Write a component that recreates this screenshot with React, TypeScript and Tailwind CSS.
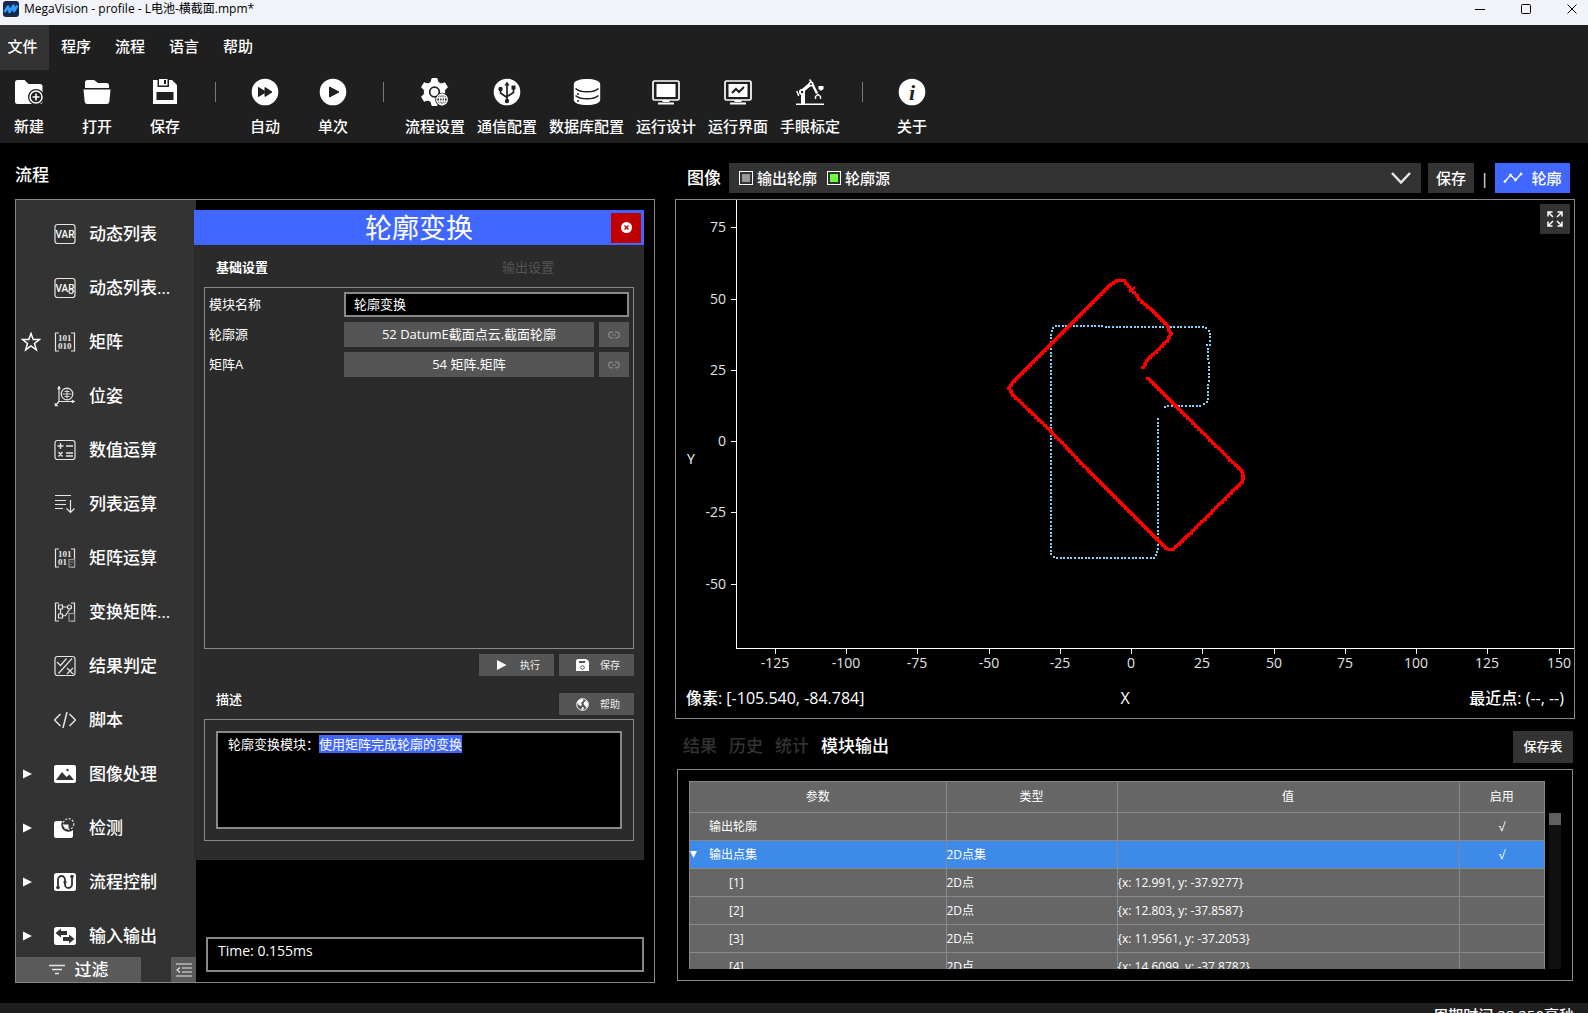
import { useEffect, useRef, useState } from 'react'
import type { ReactNode } from 'react'

type Point = [number, number]

interface ToolItem {
  label: string
  icon: ReactNode
  width: string
}

interface ModuleItem {
  label: string
  icon: ReactNode
  starred?: boolean
  expandable?: boolean
}

const MENUS = ['文件', '程序', '流程', '语言', '帮助']

const SMALL = 'w-[58px]'
const MEDIUM = 'w-[62px]'
const LARGE = 'w-[77px]'

function ToolIcon({ children }: { children: ReactNode }) {
  return (
    <svg width="28" height="28" viewBox="0 0 28 28" fill="#fff" aria-hidden="true">
      {children}
    </svg>
  )
}

function ModuleIcon({ children }: { children: ReactNode }) {
  return (
    <svg
      width="22"
      height="22"
      viewBox="0 0 22 22"
      fill="none"
      stroke="#e6e6e6"
      strokeWidth="1.2"
      className="shrink-0"
      aria-hidden="true"
    >
      {children}
    </svg>
  )
}

const TOOL_GROUPS: ToolItem[][] = [
  [
    {
      label: '新建',
      width: SMALL,
      icon: (
        <ToolIcon>
          <path d="M0 4.500a2.500 2.500 0 0 1 2.500-2.500h7l4 4h11.500a2.500 2.500 0 0 1 2.500 2.500v15a2.500 2.500 0 0 1-2.500 2.500h-22.500a2.500 2.500 0 0 1-2.500-2.500z" />
          <circle cx="21" cy="19" r="8" fill="#1f1f1f" />
          <circle cx="21" cy="19" r="6" fill="none" stroke="#fff" strokeWidth="1.500" />
          <path d="M21 15.500v7M17.500 19h7" stroke="#fff" strokeWidth="1.600" />
        </ToolIcon>
      ),
    },
    {
      label: '打开',
      width: SMALL,
      icon: (
        <ToolIcon>
          <path d="M2 10V4.500a2.500 2.500 0 0 1 2.500-2.500h6.500l4 3h8.500a2.500 2.500 0 0 1 2.500 2.500V10z" />
          <path d="M.5 11.500h27l-1.200 12.500a2.500 2.500 0 0 1-2.500 2h-19.600a2.500 2.500 0 0 1-2.500-2z" />
        </ToolIcon>
      ),
    },
    {
      label: '保存',
      width: SMALL,
      icon: (
        <ToolIcon>
          <path d="M2 2h19l5 5v19h-24z" />
          <path d="M6.500 1h11.500v8h-11.500z" fill="#1f1f1f" />
          <path d="M8 1h8.500v6.500h-8.500z" />
          <path d="M5.500 14h17v8h-17z" fill="#1f1f1f" />
          <path d="M13 2h2v4h-2z" fill="#1f1f1f" />
        </ToolIcon>
      ),
    },
  ],
  [
    {
      label: '自动',
      width: SMALL,
      icon: (
        <ToolIcon>
          <circle cx="14" cy="14" r="13.300" />
          <path d="M7.500 9.500l6.500 4V9.500l7 4.500-7 4.500v-4l-6.500 4z" fill="#1f1f1f" strokeLinejoin="round" stroke="#1f1f1f" />
        </ToolIcon>
      ),
    },
    {
      label: '单次',
      width: SMALL,
      icon: (
        <ToolIcon>
          <circle cx="14" cy="14" r="13.300" />
          <path d="M10.500 9l9.500 5-9.500 5z" fill="#1f1f1f" stroke="#1f1f1f" strokeLinejoin="round" />
        </ToolIcon>
      ),
    },
  ],
  [
    {
      label: '流程设置',
      width: MEDIUM,
      icon: (
        <ToolIcon>
          <path
            d="M11 .5h5l1 3.800 3 1.700 3.800-1.200 2.600 4.400-2.800 2.800v4l2.800 2.800-2.600 4.400-3.800-1.200-3 1.700-1 3.800h-5l-1-3.800-3-1.700-3.800 1.200-2.600-4.400 2.800-2.800v-4l-2.800-2.800 2.600-4.400 3.800 1.200 3-1.700z"
            stroke="#fff"
            strokeLinejoin="round"
          />
          <circle cx="13.500" cy="14" r="4.800" fill="#fff" stroke="#1f1f1f" strokeWidth="1.700" />
          <circle cx="21" cy="21.500" r="6.800" fill="#1f1f1f" />
          <g fill="none" stroke="#fff" strokeWidth="1.200">
            <circle cx="21" cy="21.500" r="5.300" />
            <ellipse cx="21" cy="21.500" rx="2.400" ry="5.300" />
            <path d="M15.800 19.800h10.400M15.800 23.200h10.400M21 16v11" />
          </g>
        </ToolIcon>
      ),
    },
    {
      label: '通信配置',
      width: MEDIUM,
      icon: (
        <ToolIcon>
          <circle cx="14" cy="14" r="13.300" />
          <g fill="none" stroke="#1f1f1f" strokeWidth="1.700">
            <path d="M14 6v16M7.500 11v4l6.500 4.500M20.500 10v4.500l-6.500 4" />
          </g>
          <path d="M14 3.500l2.600 4h-5.200zM18.500 7.500h4v4h-4z" fill="#1f1f1f" />
          <circle cx="7.500" cy="11" r="2.200" fill="#1f1f1f" />
          <circle cx="14" cy="23" r="2.200" fill="#1f1f1f" />
        </ToolIcon>
      ),
    },
    {
      label: '数据库配置',
      width: LARGE,
      icon: (
        <ToolIcon>
          <path d="M.8 6c0-3 6-5 13.200-5s13.200 2 13.200 5v16c0 3-6 5-13.200 5s-13.200-2-13.200-5z" />
          <path
            d="M2.500 10.500c2.500 2.500 7 3.300 11.500 3.300s9-.8 11.500-3.300M2.500 17.500c2.500 2.500 7 3.300 11.500 3.300s9-.8 11.500-3.300"
            fill="none"
            stroke="#1f1f1f"
            strokeWidth="1.400"
          />
          <circle cx="5" cy="16" r="1" fill="#1f1f1f" />
          <circle cx="5" cy="23" r="1" fill="#1f1f1f" />
        </ToolIcon>
      ),
    },
    {
      label: '运行设计',
      width: MEDIUM,
      icon: (
        <ToolIcon>
          <rect x="1" y="3" width="26" height="19" rx="1.500" fill="none" stroke="#fff" strokeWidth="1.700" />
          <path d="M4.500 6h19v13h-19zM10.500 22h7v2h-7zM6 24.500h16v2h-16z" />
        </ToolIcon>
      ),
    },
    {
      label: '运行界面',
      width: MEDIUM,
      icon: (
        <ToolIcon>
          <rect x="1" y="3" width="26" height="19" rx="1.500" fill="none" stroke="#fff" strokeWidth="1.700" />
          <path d="M4.500 6h19v13h-19zM10.500 22h7v2h-7zM6 24.500h16v2h-16z" />
          <path d="M8 15l4-4 3 3 5-5" fill="none" stroke="#1f1f1f" strokeWidth="2" />
        </ToolIcon>
      ),
    },
    {
      label: '手眼标定',
      width: MEDIUM,
      icon: (
        <ToolIcon>
          <path d="M0 25.500h28v1.500h-28zM5 15h4v11h-4z" />
          <path d="M5 14l9.500-8" stroke="#fff" strokeWidth="3.500" />
          <path d="M15.500 4.500l5.500 11" stroke="#fff" strokeWidth="2.400" />
          <circle cx="15" cy="6" r="2.500" />
          <circle cx="15" cy="6" r="1" fill="#1f1f1f" />
          <circle cx="6" cy="14" r="3" />
          <circle cx="6" cy="14" r="1.200" fill="#1f1f1f" />
          <path d="M13.500 1.500l2 2.500M.8 13l2 5" stroke="#fff" strokeWidth="1.500" />
          <path d="M19.500 21v-2.500l2.500-2 2.500 2v2.500" fill="none" stroke="#fff" strokeWidth="1.400" />
          <path d="M22.500 8h5v3l-2 1.500h-1l-2-1.500z" />
        </ToolIcon>
      ),
    },
  ],
  [
    {
      label: '关于',
      width: SMALL,
      icon: (
        <ToolIcon>
          <circle cx="14" cy="14" r="13.300" />
          <text
            x="14"
            y="21.500"
            fill="#1f1f1f"
            textAnchor="middle"
            fontFamily="Liberation Serif, serif"
            fontSize="22"
            fontStyle="italic"
            fontWeight="700"
          >
            i
          </text>
        </ToolIcon>
      ),
    },
  ],
]

const frame = <rect x="1" y="1.500" width="20" height="19" rx="2.500" />
const brackets = <path d="M5 2h-3.500v18h3.500M17 2h3.500v18h-3.500" />

function Bits({ x, y, children }: { x: number; y: number; children: string }) {
  return (
    <text
      x={x}
      y={y}
      fill="#e6e6e6"
      stroke="none"
      fontFamily="Liberation Serif, serif"
      fontSize="9"
      fontWeight="700"
    >
      {children}
    </text>
  )
}

function VarText() {
  return (
    <text
      x="11"
      y="15"
      fill="#fff"
      stroke="none"
      textAnchor="middle"
      fontFamily="Liberation Sans Narrow, Roboto, sans-serif"
      fontSize="10"
    >
      VAR
    </text>
  )
}

const MODULES: ModuleItem[] = [
  {
    label: '动态列表',
    icon: (
      <ModuleIcon>
        {frame}
        <VarText />
      </ModuleIcon>
    ),
  },
  {
    label: '动态列表…',
    icon: (
      <ModuleIcon>
        {frame}
        <VarText />
        <circle cx="17" cy="14.500" r="2" fill="#333" />
      </ModuleIcon>
    ),
  },
  {
    label: '矩阵',
    starred: true,
    icon: (
      <ModuleIcon>
        {brackets}
        <Bits x={4} y={10}>101</Bits>
        <Bits x={4} y={18}>010</Bits>
      </ModuleIcon>
    ),
  },
  {
    label: '位姿',
    icon: (
      <ModuleIcon>
        <path d="M5 1.500v15h15.500M5 16.500l-3.500 4" />
        <path d="M3.500 4l1.500-3 1.500 3zM18 15l3 1.500-3 1.500zM1 18v3h3z" fill="#e6e6e6" strokeWidth=".5" />
        <circle cx="13" cy="9" r="5.800" />
        <path d="M13 4.500v9M8.500 9h9M10.500 6.500h5M10.500 11.500h5" strokeWidth=".9" />
      </ModuleIcon>
    ),
  },
  {
    label: '数值运算',
    icon: (
      <ModuleIcon>
        {frame}
        <path d="M3.500 7h6M6.500 4v6M12 7h7M12 14h7M12 17h7M4.500 13l4 4.500M8.500 13l-4 4.500" strokeWidth="1.400" />
      </ModuleIcon>
    ),
  },
  {
    label: '列表运算',
    icon: (
      <ModuleIcon>
        <path d="M1 2.500h16M1 7.500h11M1 11.500h11M1 15.500h8M16.500 7v12M12.500 15.500l4 4 4-4" />
      </ModuleIcon>
    ),
  },
  {
    label: '矩阵运算',
    icon: (
      <ModuleIcon>
        {brackets}
        <Bits x={4} y={10}>101</Bits>
        <Bits x={4} y={18}>01</Bits>
        <rect x="15" y="12.500" width="5.500" height="7.500" fill="#333" stroke="#999" />
        <path d="M16.500 15h2.500M16.500 17.500h1" stroke="#999" />
      </ModuleIcon>
    ),
  },
  {
    label: '变换矩阵…',
    icon: (
      <ModuleIcon>
        {brackets}
        <path d="M4.500 4h4v4h-4zM4.500 13h4v4h-4zM6.500 8v5M8.500 6h5M8.500 15l3-.5 4-6" />
        <circle cx="15.500" cy="6" r="2" />
        <rect x="15" y="12.500" width="5.500" height="7.500" fill="#333" stroke="#999" />
      </ModuleIcon>
    ),
  },
  {
    label: '结果判定',
    icon: (
      <ModuleIcon>
        {frame}
        <path d="M3 7l3.500 3.500 6-7M4.500 18.500l13.500-15M13 13l6 6M19 13l-6 6" />
      </ModuleIcon>
    ),
  },
  {
    label: '脚本',
    icon: (
      <ModuleIcon>
        <path d="M6.500 5l-6 6 6 6M15.500 5l6 6-6 6M13 3l-4 16" strokeWidth="1.500" />
      </ModuleIcon>
    ),
  },
  {
    label: '图像处理',
    expandable: true,
    icon: (
      <ModuleIcon>
        <rect x="0" y="2" width="22" height="18" rx="2" fill="#fff" stroke="none" />
        <path d="M2 17l6-8 4.500 5 3-2.500 4.500 5.500z" fill="#333" stroke="none" />
        <circle cx="13.500" cy="7" r="1.200" fill="#333" stroke="none" />
      </ModuleIcon>
    ),
  },
  {
    label: '检测',
    expandable: true,
    icon: (
      <ModuleIcon>
        <rect x="0" y="4" width="19" height="17" rx="2.500" fill="#fff" stroke="none" />
        <path d="M9 3h10.500v9.500a6 6 0 0 1-10.500-9.500z" fill="#333" stroke="none" />
        <path d="M14.500 7.500v5a5 5 0 0 1-5-5z" fill="#fff" stroke="none" />
        <circle cx="14.500" cy="7" r="5.300" stroke="#ddd" strokeDasharray="2 1.500" />
      </ModuleIcon>
    ),
  },
  {
    label: '流程控制',
    expandable: true,
    icon: (
      <ModuleIcon>
        <rect x="0" y="2" width="22" height="18" rx="2.500" fill="#fff" stroke="none" />
        <path
          d="M4 16.500V8.500a3.500 3.500 0 0 1 7 0V13.500a3.500 3.500 0 0 0 7 0V5.500"
          stroke="#333"
          strokeWidth="1.800"
        />
        <circle cx="4" cy="16.500" r="1.800" fill="#333" stroke="none" />
        <circle cx="18" cy="5.500" r="1.800" fill="#333" stroke="none" />
        <circle cx="11" cy="11" r="1.600" fill="#333" stroke="none" />
      </ModuleIcon>
    ),
  },
  {
    label: '输入输出',
    expandable: true,
    icon: (
      <ModuleIcon>
        <rect x="0" y="2" width="22" height="18" rx="2.500" fill="#fff" stroke="none" />
        <path
          d="M1.500 8l5.500-4.500v2.500h6v4h-6v2.500zM20.500 14l-5.500 4.500v-2.500h-6v-4h6v-2.500z"
          fill="#333"
          stroke="none"
        />
      </ModuleIcon>
    ),
  },
]

const ROWS = [
  { name: '[1]', type: '2D点', value: '{x: 12.991, y: -37.9277}' },
  { name: '[2]', type: '2D点', value: '{x: 12.803, y: -37.8587}' },
  { name: '[3]', type: '2D点', value: '{x: 11.9561, y: -37.2053}' },
  { name: '[4]', type: '2D点', value: '{x: 14.6099, y: -37.8782}' },
]

const SOURCE_CONTOUR: Point[] = [
  [482, 219], [482, 350], [479, 358], [379, 358], [375, 354], [375, 134], [376, 129], [379, 126],
  [427, 126], [430, 127], [529, 127], [534, 132], [534, 145], [531, 145], [532, 148], [533, 172],
  [532, 197], [531, 202], [525, 206], [491, 206], [486, 209],
]

const OUTPUT_CONTOUR: Point[] = [
  [472, 178], [487, 193], [502, 208], [566, 271], [568, 277], [566, 282], [504, 343], [497, 349],
  [491, 349], [484, 342], [414, 272], [374, 230], [337, 195], [333, 188], [336, 183], [434, 85],
  [441, 80], [448, 80], [455, 89], [467, 103], [474, 108], [491, 125], [495, 133], [492, 140],
  [472, 159], [467, 168],
]

// Walk along the outline and return a point every `step` units
function sample(points: Point[], step: number): Point[] {
  const result: Point[] = []
  let carry = 0
  for (let i = 1; i < points.length; i++) {
    const [x0, y0] = points[i - 1]
    const [x1, y1] = points[i]
    const length = Math.hypot(x1 - x0, y1 - y0)
    let at = carry
    while (at < length) {
      result.push([
        Math.round(x0 + ((x1 - x0) * at) / length),
        Math.round(y0 + ((y1 - y0) * at) / length),
      ])
      at += step
    }
    carry = at - length
  }
  return result
}

const toPath = (points: Point[]) => 'M' + points.map((p) => p.join(' ')).join('L')

const X_TICKS = [-125, -100, -75, -50, -25, 0, 25, 50, 75, 100, 125, 150]
const Y_TICKS = [75, 50, 25, 0, -25, -50]
const SCALE = 2.85

function ContourPlot() {
  const source = sample(SOURCE_CONTOUR, 3.6)
  const output = sample(OUTPUT_CONTOUR, 4)

  return (
    <svg viewBox="0 0 898 480" className="min-h-0 w-full flex-1" role="img" aria-label="轮廓">
      <g shapeRendering="crispEdges">
        <path d="M60.500 0V448.500H898" fill="none" stroke="#fff" />
        {X_TICKS.map((v) => {
          const x = Math.round(455 + v * SCALE) + 0.5
          return <path key={v} d={`M${x} 449v5`} stroke="#fff" />
        })}
        {Y_TICKS.map((v) => {
          const y = Math.round(241 - v * SCALE) + 0.5
          return <path key={v} d={`M55 ${y}h5`} stroke="#fff" />
        })}
        {source.map(([x, y], i) => (
          <rect key={i} x={x - 1} y={y - 1} width="2" height="2" fill="#87cefa" />
        ))}
        <path d={toPath(OUTPUT_CONTOUR.slice(0, 9))} fill="none" stroke="#f00" strokeWidth="3" />
        <path d={toPath(OUTPUT_CONTOUR.slice(8))} fill="none" stroke="#f00" strokeWidth="3" />
        {output.map(([x, y], i) => (
          <rect key={i} x={x - 2} y={y - 1} width="4" height="3" fill="#f00" />
        ))}
        <path d="M453 92l6-5M453 87l6 6" stroke="#f00" strokeWidth="2" />
      </g>
      <g fill="#e4e4e4" fontSize="14">
        {X_TICKS.map((v) => (
          <text key={v} x={Math.round(455 + v * SCALE)} y="468" textAnchor="middle">
            {v}
          </text>
        ))}
        {Y_TICKS.map((v) => (
          <text key={v} x="50" y={Math.round(246 - v * SCALE)} textAnchor="end">
            {v}
          </text>
        ))}
        <text x="15" y="264" textAnchor="middle" fill="#fff" fontWeight="500">
          Y
        </text>
      </g>
    </svg>
  )
}

function TitleBar() {
  return (
    <header className="flex h-[25px] shrink-0 items-center bg-[#f1f3f9] pr-4 pb-[7px] pl-[3px] text-xs text-black">
      <svg width="16" height="16" viewBox="0 0 16 16" aria-hidden="true">
        <rect width="16" height="16" rx="3" fill="#14284b" />
        <path
          d="M1.500 11l3.500-5.500 1.500 5.500 4-6.500.5 5.500 3.500-5.500"
          fill="none"
          stroke="#2f9bff"
          strokeWidth="2.600"
          strokeLinejoin="round"
        />
      </svg>
      <h1 className="ml-[5px] flex-1 leading-4">MegaVision - profile - L电池-横截面.mpm*</h1>
      <div className="flex gap-[35px]">
        <button aria-label="最小化">
          <svg width="11" height="11" stroke="#000">
            <path d="M0 5.500h10" />
          </svg>
        </button>
        <button aria-label="最大化">
          <svg width="11" height="11" fill="none" stroke="#000">
            <rect x=".5" y=".5" width="9" height="9" rx="1" />
          </svg>
        </button>
        <button aria-label="关闭" className="-mr-1.5">
          <svg width="11" height="11" stroke="#000">
            <path d="M.5.5l9 9M9.500.5l-9 9" />
          </svg>
        </button>
      </div>
    </header>
  )
}

function ToolBar() {
  return (
    <div className="flex h-[73px] shrink-0 gap-2.5 bg-[#1f1f1f] pt-2 text-[15px] font-medium">
      {TOOL_GROUPS.map((group, i) => (
        <div key={i} className="flex gap-2.5">
          {i > 0 && (
            <div className="flex w-[22px] justify-center pt-1">
              <div className="h-5 w-px bg-[#777]" />
            </div>
          )}
          {group.map((tool) => (
            <button key={tool.label} className={`flex flex-col items-center ${tool.width}`}>
              {tool.icon}
              <span className="mt-2.5 leading-5 whitespace-nowrap">{tool.label}</span>
            </button>
          ))}
        </div>
      ))}
    </div>
  )
}

function ModuleList() {
  return (
    <nav className="flex w-[180px] shrink-0 flex-col bg-[#333] font-medium">
      <ul className="min-h-0 flex-1 overflow-hidden pt-[7px]">
        {MODULES.map((item) => (
          <li key={item.label}>
            <button className="flex h-[54px] w-full items-center text-[17px]">
              <span className="flex w-[38px] shrink-0 pl-[5px]">
                {item.starred && (
                  <svg width="20" height="20" viewBox="0 0 20 20" fill="none" stroke="#fff" strokeWidth="1.500">
                    <path d="M10 1.500l2.200 6h6.300l-5 4 1.800 6.300-5.300-3.800-5.300 3.800 1.800-6.300-5-4h6.300z" />
                  </svg>
                )}
                {item.expandable && (
                  <svg width="14" height="10" viewBox="0 0 14 10" fill="#fff">
                    <path d="M2 .5l9 4.500-9 4.500z" />
                  </svg>
                )}
              </span>
              {item.icon}
              <span className="ml-[13px] whitespace-nowrap">{item.label}</span>
            </button>
          </li>
        ))}
      </ul>
      <div className="flex h-[25px] shrink-0 justify-between">
        <button className="flex w-[125px] items-center justify-center gap-2.5 bg-[#5a5a5a] text-[17px]">
          <svg width="16" height="12" stroke="#e6e6e6" strokeWidth="1.500">
            <path d="M0 1.500h16M3 5.500h10M6 9.500h4" />
          </svg>
          过滤
        </button>
        <button aria-label="收起" className="flex w-[25px] items-center justify-center bg-[#5a5a5a]">
          <svg width="16" height="14" fill="none" stroke="#e6e6e6" strokeWidth="1.200">
            <path d="M0 1h16M6 5h10M6 9h10M0 13h16M4 4.500l-3 2.500 3 2.500" />
          </svg>
        </button>
      </div>
    </nav>
  )
}

function LinkButton({ label }: { label: string }) {
  return (
    <button aria-label={label} className="flex w-[30px] items-center justify-center bg-[#555]">
      <svg width="12" height="8" viewBox="0 0 12 8" fill="none" stroke="#888" strokeWidth="1.200">
        <path d="M5 1.200H3.500a2.800 2.800 0 0 0 0 5.600H5M7 1.200h1.500a2.800 2.800 0 0 1 0 5.600H7M4 4h4" />
      </svg>
    </button>
  )
}

function SmallButton({ icon, children }: { icon: ReactNode; children: string }) {
  return (
    <button className="flex h-[22px] w-[75px] items-center bg-[#555] pl-[17px] text-[10px] text-[#eee]">
      <span className="w-[24px]">{icon}</span>
      {children}
    </button>
  )
}

function ContourDialog() {
  const [name, setName] = useState('轮廓变换')
  const descriptionRef = useRef<HTMLTextAreaElement>(null)

  useEffect(() => {
    // The summary after the colon starts out selected
    const area = descriptionRef.current
    if (!area) return
    area.focus()
    area.setSelectionRange(7, area.value.length)
  }, [])

  return (
    <section className="-ml-0.5 flex h-[650px] flex-col bg-[#2b2b2b] text-[13px]">
      <div className="flex h-[35px] shrink-0 items-center bg-[#4067ff] pr-[3px] pl-[33px]">
        <h2 className="flex-1 text-center text-[27px] leading-[35px]">轮廓变换</h2>
        <button aria-label="关闭" className="flex size-[30px] items-center justify-center bg-[#c00000]">
          <svg width="11" height="11" viewBox="0 0 11 11">
            <circle cx="5.500" cy="5.500" r="5.500" fill="#fff" />
            <path d="M3.500 3.500l4 4M7.500 3.500l-4 4" stroke="#c00000" strokeWidth="1.300" />
          </svg>
        </button>
      </div>
      <div className="mt-3 flex px-[22px]" role="tablist">
        <button role="tab" aria-selected="true" className="flex-1 text-left leading-5 font-bold">
          基础设置
        </button>
        <button role="tab" aria-selected="false" className="w-[120px] text-left leading-5 text-[#555]">
          输出设置
        </button>
      </div>
      <div className="mx-2.5 mt-2.5 flex min-h-0 flex-1 flex-col gap-[5px] border border-[#888] p-1">
        <div className="flex h-[25px] items-center">
          <label htmlFor="module-name" className="w-[135px]">
            模块名称
          </label>
          <input
            id="module-name"
            value={name}
            onChange={(e) => setName(e.target.value)}
            className="h-full min-w-0 flex-1 border-2 border-[#888] bg-black px-2 pb-0.5 outline-none"
          />
        </div>
        <div className="flex h-[25px]">
          <span className="w-[135px] leading-[25px]">轮廓源</span>
          <button className="mr-[5px] flex-1 bg-[#555]">52 DatumE截面点云.截面轮廓</button>
          <LinkButton label="链接轮廓源" />
        </div>
        <div className="flex h-[25px]">
          <span className="w-[135px] leading-[25px]">矩阵A</span>
          <button className="mr-[5px] flex-1 bg-[#555]">54 矩阵.矩阵</button>
          <LinkButton label="链接矩阵A" />
        </div>
      </div>
      <div className="mx-2.5 mt-[5px] flex justify-end gap-[5px]">
        <SmallButton
          icon={
            <svg width="11" height="12" viewBox="0 0 11 12" fill="#fff">
              <path d="M1 1l9.500 5L1 11z" />
            </svg>
          }
        >
          执行
        </SmallButton>
        <SmallButton
          icon={
            <svg width="13" height="12" viewBox="0 0 13 12">
              <path d="M1.500 0h9L13 2.500V12H0V1.500z" fill="#fff" />
              <path d="M3 2h6v2H3z" fill="#555" />
              <circle cx="6.500" cy="8.500" r="1.800" fill="none" stroke="#555" />
            </svg>
          }
        >
          保存
        </SmallButton>
      </div>
      <div className="mx-2.5 mt-[17px] flex items-center justify-between">
        <h3 className="pb-2.5 pl-3 leading-3 font-medium">描述</h3>
        <SmallButton
          icon={
            <svg width="13" height="13" viewBox="0 0 13 13">
              <circle cx="6.500" cy="6.500" r="5.800" fill="none" stroke="#fff" />
              <path
                d="M2 3l4-2.500 1.500 2L5 5l1 2-1.500 1L1.500 6zM8 4l3-1.500 1.500 4-2 3.500-1.500-2-1.500-2zM6 9l2 .5-1 2.500-1.500-.5z"
                fill="#fff"
              />
            </svg>
          }
        >
          帮助
        </SmallButton>
      </div>
      <div className="mx-2.5 mt-1 mb-[19px] flex h-[122px] shrink-0 border border-[#888] p-[11px]">
        <textarea
          ref={descriptionRef}
          readOnly
          aria-label="描述"
          defaultValue="轮廓变换模块：使用矩阵完成轮廓的变换"
          className="w-full resize-none border-2 border-[#888] bg-black px-2.5 py-0.5 leading-[18px] outline-none selection:bg-[#4067ff] selection:text-white"
        />
      </div>
    </section>
  )
}

function Legend({ label, color }: { label: string; color: string }) {
  return (
    <label className="flex items-center gap-1">
      <input
        type="checkbox"
        className={`size-3.5 appearance-none border border-white bg-clip-content p-0.5 ${color}`}
      />
      {label}
    </label>
  )
}

function ImagePanel() {
  return (
    <>
      <div className="flex h-[30px] shrink-0 items-center pr-[5px] pl-3 text-[15px] font-medium">
        <h2 className="w-[42px] text-[17px]">图像</h2>
        <div className="flex h-full flex-1 items-center gap-2.5 bg-[#333] px-2.5">
          <Legend label="输出轮廓" color="bg-[#999]" />
          <Legend label="轮廓源" color="bg-[#6cff3e]" />
          <button aria-label="展开" className="ml-auto">
            <svg width="20" height="12" fill="none" stroke="#e6e6e6" strokeWidth="2.500">
              <path d="M1 1l9 9.500L19 1" />
            </svg>
          </button>
        </div>
        <button className="ml-[7px] h-full w-[46px] bg-[#333]">保存</button>
        <span className="w-[21px] text-center">|</span>
        <button className="flex h-full w-[75px] items-center justify-center gap-2 bg-[#4067ff]">
          <svg width="20" height="12" viewBox="0 0 20 12" fill="#fff" stroke="#fff">
            <path d="M2 9.500l5.500-6.500 5 5L18 2" fill="none" strokeWidth="1.300" />
            <circle cx="2" cy="9.500" r="1" />
            <circle cx="7.500" cy="3" r="1" />
            <circle cx="12.500" cy="8" r="1" />
            <circle cx="18" cy="2" r="1" />
          </svg>
          轮廓
        </button>
      </div>
      <div className="relative mt-1.5 flex min-h-0 flex-1 flex-col border border-[#888]">
        <ContourPlot />
        <button
          aria-label="全屏"
          className="absolute top-1 right-1 flex size-[30px] items-center justify-center bg-[#333]"
        >
          <svg width="16" height="16" fill="none" stroke="#fff" strokeWidth="1.500">
            <path d="M1 5.500V1h4.500M1 1l5 5M10.500 1H15v4.500M15 1l-5 5M1 10.500V15h4.500M1 15l5-5M10.500 15H15v-4.500M15 15l-5-5" />
          </svg>
        </button>
        <div className="flex h-[38px] shrink-0 items-center px-2.5 pb-0.5 text-base font-medium">
          <span className="flex-1">像素: [-105.540, -84.784]</span>
          <span>X</span>
          <span className="flex-1 text-right">最近点: (--, --)</span>
        </div>
      </div>
    </>
  )
}

const CELL = 'border border-[#888] p-0 font-normal'

function OutputTable() {
  return (
    <div className="flex h-[212px] shrink-0 border border-[#888] p-[11px]">
      <div className="min-w-0 flex-1 overflow-hidden">
        <table className="w-full table-fixed border-collapse bg-[#666] text-left text-xs">
          <thead>
            <tr className="h-[31px]">
              <th className={`w-[30%] text-center ${CELL}`}>参数</th>
              <th className={`w-[20%] text-center ${CELL}`}>类型</th>
              <th className={`w-[40%] text-center ${CELL}`}>值</th>
              <th className={`w-[10%] text-center ${CELL}`}>启用</th>
            </tr>
          </thead>
          <tbody>
            <tr className="h-[28px]">
              <td className={CELL}>
                <span className="pl-[19px]">输出轮廓</span>
              </td>
              <td className={CELL} />
              <td className={CELL} />
              <td className={`text-center ${CELL}`}>√</td>
            </tr>
            <tr className="h-[28px] bg-[#3d8ae8]">
              <td className={CELL}>
                <div className="flex items-center">
                  <svg width="7" height="7" fill="#fff" className="mr-3">
                    <path d="M0 0h7L3.500 7z" />
                  </svg>
                  输出点集
                </div>
              </td>
              <td className={CELL}>2D点集</td>
              <td className={CELL} />
              <td className={`text-center ${CELL}`}>√</td>
            </tr>
            {ROWS.map((row) => (
              <tr key={row.name} className="h-[28px]">
                <td className={CELL}>
                  <span className="pl-[39px]">{row.name}</span>
                </td>
                <td className={CELL}>{row.type}</td>
                <td className={CELL}>{row.value}</td>
                <td className={CELL} />
              </tr>
            ))}
          </tbody>
        </table>
      </div>
      <div className="mt-8 ml-1 w-3 bg-[#111]">
        <div className="h-3 bg-[#606060]" />
      </div>
    </div>
  )
}

export default function App() {
  const tabs = ['结果', '历史', '统计', '模块输出']

  return (
    <div className="flex h-screen flex-col overflow-hidden bg-black font-['Open_Sans','Noto_Sans_CJK_SC',sans-serif] text-white">
      <TitleBar />
      <nav className="flex h-[45px] shrink-0 bg-[#1f1f1f] text-[15px] font-medium">
        {MENUS.map((menu, i) => (
          <button
            key={menu}
            className={i === 0 ? 'mr-1 w-[49px] bg-[#333] pr-1 pb-0.5' : 'w-[54px] pr-1 pb-0.5 pl-2 text-left'}
          >
            {menu}
          </button>
        ))}
      </nav>
      <ToolBar />
      <main className="flex min-h-0 flex-1 gap-5 py-5 pr-[13px] pl-[15px]">
        <div className="flex w-[640px] shrink-0 flex-col">
          <h2 className="h-9 text-[17px] leading-6 font-medium">流程</h2>
          <div className="flex min-h-0 flex-1 border border-[#888]">
            <ModuleList />
            <div className="flex min-w-0 flex-1 flex-col justify-between py-2.5 pr-2.5">
              <ContourDialog />
              <output className="ml-2.5 h-[35px] border-2 border-[#888] px-2.5 pt-0.5 text-sm font-medium">
                Time: 0.155ms
              </output>
            </div>
          </div>
        </div>
        <div className="flex min-w-0 flex-1 flex-col pb-0.5">
          <ImagePanel />
          <div className="mt-3 mb-1.5 flex h-8 shrink-0 items-center pr-0.5 pl-2">
            <div className="flex flex-1 gap-3 pb-0.5 text-[17px] leading-6 font-medium" role="tablist">
              {tabs.map((tab) => (
                <button
                  key={tab}
                  role="tab"
                  aria-selected={tab === '模块输出'}
                  className={tab === '模块输出' ? 'text-white' : 'text-[#333]'}
                >
                  {tab}
                </button>
              ))}
            </div>
            <button className="h-8 w-[60px] bg-[#333] text-[13px] font-medium">保存表</button>
          </div>
          <div className="mr-0.5 ml-0.5">
            <OutputTable />
          </div>
        </div>
      </main>
      <footer className="h-2.5 shrink-0 overflow-hidden bg-[#1f1f1f] pr-3.5 text-right text-[15px] leading-6 font-medium">
        周期时间:28.250毫秒
      </footer>
    </div>
  )
}
